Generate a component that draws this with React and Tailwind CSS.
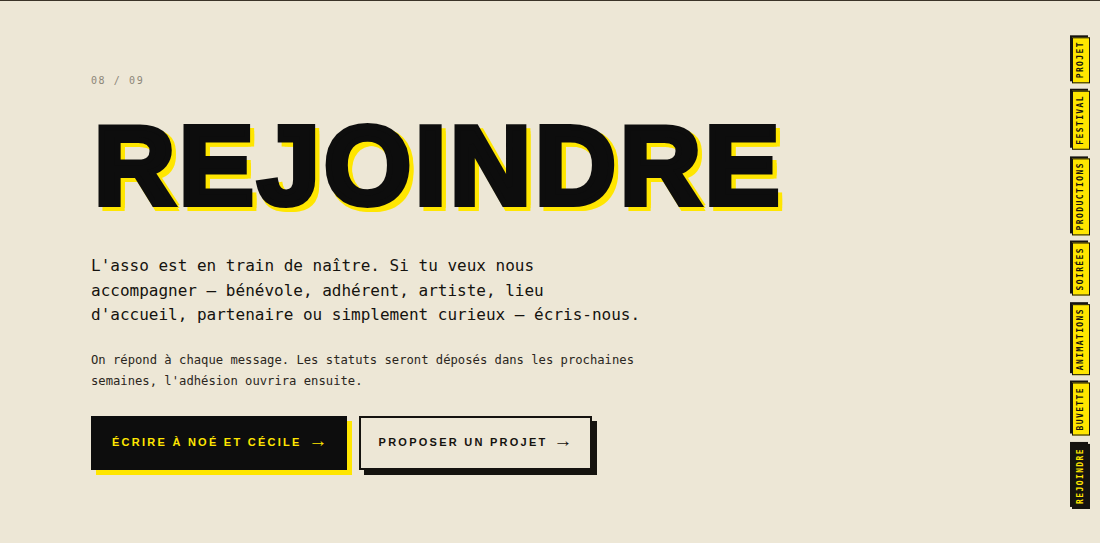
import React from 'react';

const navItems = [
  { label: 'PROJET' },
  { label: 'FESTIVAL' },
  { label: 'PRODUCTIONS' },
  { label: 'SOIRÉES' },
  { label: 'ANIMATIONS' },
  { label: 'BUVETTE' },
  { label: 'REJOINDRE', active: true },
];

const mono = "font-['DejaVu_Sans_Mono','Liberation_Mono',monospace]";
const sans = "font-['Liberation_Sans',Arial,sans-serif]";

const SideNav = () => (
  <nav className="absolute right-[10px] top-[36px] flex flex-col gap-[8px]">
    {navItems.map((item) => (
      <a
        key={item.label}
        href="#"
        className={`${mono} block rotate-180 [writing-mode:vertical-rl] border-[1.5px] border-[#15130f] px-[3.5px] py-[3px] text-[8px] font-bold leading-[10px] tracking-[1.4px] shadow-[2px_2px_0_#15130f] ${
          item.active ? 'bg-[#15130f] text-[#ffe600]' : 'bg-[#ffe600] text-[#15130f]'
        }`}
      >
        {item.label}
      </a>
    ))}
  </nav>
);

const Arrow = () => <span className="relative -top-[2px] text-[19px] leading-none tracking-normal">→</span>;

export default function App() {
  return (
    <div className="relative min-h-screen overflow-hidden border-t border-[#3b3428] bg-[#ede7d6] text-[#15130f]">
      <main className="pl-[91px] pt-[73px]">
        {/* section counter */}
        <div className={`${mono} text-[10px] leading-[14px] tracking-[1.6px] text-[#8c8678]`}>08 / 09</div>

        {/* big title: stroke thickens the glyphs, stacked shadows give the yellow offset */}
        <h1
          className={`${sans} ml-[3px] mt-[22px] text-[112px] font-bold leading-none tracking-[4px] text-[#0d0d0d] [-webkit-text-stroke:6px_#0d0d0d] [text-shadow:4px_4px_0_#ffe600,7px_7px_0_#ffe600,1px_7px_0_#ffe600,7px_1px_0_#ffe600,4px_7px_0_#ffe600,7px_4px_0_#ffe600,6px_6px_0_#ffe600,2px_6px_0_#ffe600,6px_2px_0_#ffe600]`}
        >
          REJOINDRE
        </h1>

        <p className={`${mono} mt-[32px] max-w-[552px] text-[16px] leading-[24.5px] text-[#15130f]`}>
          L'asso est en train de naître. Si tu veux nous accompagner — bénévole, adhérent, artiste, lieu d'accueil, partenaire ou simplement curieux — écris-nous.
        </p>

        <p className={`${mono} mt-[22px] max-w-[552px] text-[12.2px] leading-[21px] text-[#2a2620]`}>
          On répond à chaque message. Les statuts seront déposés dans les prochaines semaines, l'adhésion ouvrira ensuite.
        </p>

        <div className="mt-[24px] flex items-start gap-[12px]">
          <a
            href="#"
            className={`${sans} flex h-[54px] items-center gap-[7px] border border-[#0d0d0d] bg-[#0d0d0d] pl-[20px] pr-[18px] text-[11px] font-bold tracking-[0.205em] text-[#ffe600] shadow-[5px_5px_0_#ffe600]`}
          >
            <span>ÉCRIRE À NOÉ ET CÉCILE</span>
            <Arrow />
          </a>
          <a
            href="#"
            className={`${sans} flex h-[54px] items-center gap-[6px] border-2 border-[#15130f] pl-[18px] pr-[17px] text-[11px] font-bold tracking-[0.205em] text-[#15130f] shadow-[5px_5px_0_#15130f]`}
          >
            <span>PROPOSER UN PROJET</span>
            <Arrow />
          </a>
        </div>
      </main>

      <SideNav />
    </div>
  );
}
